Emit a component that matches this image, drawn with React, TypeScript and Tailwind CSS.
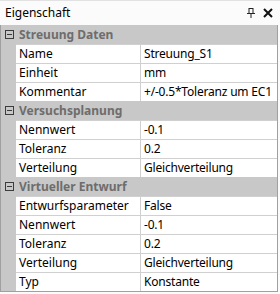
import React from "react";

const groups = [
  {
    title: "Streuung Daten",
    rows: [
      ["Name", "Streuung_S1"],
      ["Einheit", "mm"],
      ["Kommentar", "+/-0.5*Toleranz um EC1"],
    ],
  },
  {
    title: "Versuchsplanung",
    rows: [
      ["Nennwert", "-0.1"],
      ["Toleranz", "0.2"],
      ["Verteilung", "Gleichverteilung"],
    ],
  },
  {
    title: "Virtueller Entwurf",
    rows: [
      ["Entwurfsparameter", "False"],
      ["Nennwert", "-0.1"],
      ["Toleranz", "0.2"],
      ["Verteilung", "Gleichverteilung"],
      ["Typ", "Konstante"],
    ],
  },
];

function MinusBox() {
  return (
    <div className="w-[9px] h-[9px] border border-[#3c3c3c] flex items-center justify-center">
      <div className="w-[5px] h-px bg-[#3c3c3c]" />
    </div>
  );
}

export default function App() {
  return (
    <div
      className="w-[280px] h-[294px] bg-[#fbfbfb] text-[12px] text-black overflow-hidden"
      style={{ fontFamily: '"Noto Sans", "Open Sans", sans-serif' }}
    >
      <div className="h-[25px] flex items-center justify-between pl-[5px] pr-[7px] border-t border-[#e2e2e2]">
        <span>Eigenschaft</span>
        <div className="flex items-center gap-[8px]">
          <svg width="8" height="10" viewBox="0 0 8 10">
            <rect x="2" y="0.5" width="4" height="5" fill="none" stroke="#222" strokeWidth="1" />
            <rect x="0" y="5" width="8" height="1" fill="#222" />
            <rect x="3.5" y="6" width="1" height="4" fill="#222" />
          </svg>
          <svg width="10" height="10" viewBox="0 0 10 10">
            <path d="M1 1 L9 9 M9 1 L1 9" stroke="#111" strokeWidth="2" />
          </svg>
        </div>
      </div>
      <div className="w-[278px] border-l border-b border-r border-[#a0a0a0] bg-[#c8c8c8]">
        {groups.map((g) => (
          <div key={g.title}>
            <div className="h-[19px] flex items-center">
              <div className="w-[15px] flex items-center justify-center pl-px">
                <MinusBox />
              </div>
              <span className="pl-[3px] font-bold text-[#6d6d6d]">{g.title}</span>
            </div>
            {g.rows.map(([name, value]) => (
              <div key={g.title + name} className="h-[19px] flex">
                <div className="w-[15px]" />
                <div className="flex-1 flex bg-white border-t border-[#d0d0d0]">
                  <div className="w-[125px] border-r border-[#d0d0d0] pl-[3px] flex items-center">{name}</div>
                  <div className="flex-1 pl-[3px] flex items-center whitespace-nowrap tracking-[-0.2px]">{value}</div>
                </div>
              </div>
            ))}
          </div>
        ))}
      </div>
    </div>
  );
}
